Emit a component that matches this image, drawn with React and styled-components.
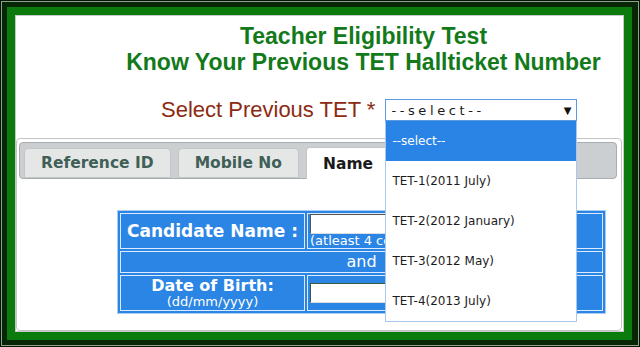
import styled, { createGlobalStyle } from "styled-components";

const GlobalStyle = createGlobalStyle`
  html, body {
    margin: 0;
    padding: 0;
    background: #ffffff;
  }
  * {
    box-sizing: border-box;
  }
`;

const options = [
  "--select--",
  "TET-1(2011 July)",
  "TET-2(2012 January)",
  "TET-3(2012 May)",
  "TET-4(2013 July)",
];

const App = () => {
  return (
    <>
      <GlobalStyle />
      <Frame>
        <GreenBand>
          <Panel>
            <Heading>
              <div>Teacher Eligibility Test</div>
              <div>Know Your Previous TET Hallticket Number</div>
            </Heading>

            <SelectRow>
              <Label>Select Previous TET *</Label>
              <SelectWrap>
                <SelectBox>
                  <span>--select--</span>
                  <Arrow>&#9660;</Arrow>
                </SelectBox>
                <OptionList>
                  {options.map((o, i) => (
                    <Option key={o} active={i === 0}>
                      {o}
                    </Option>
                  ))}
                </OptionList>
              </SelectWrap>
            </SelectRow>

            <Tabs>
              <TabBar>
                <Tab>Reference ID</Tab>
                <Tab>Mobile No</Tab>
                <Tab active>Name</Tab>
              </TabBar>

              <SearchTable>
                <tbody>
                  <tr>
                    <LabelCell size={17}>Candidate Name :</LabelCell>
                    <FieldCell>
                      <Input />
                      <Hint>(atleast 4 consecutive characters)</Hint>
                    </FieldCell>
                  </tr>
                  <tr>
                    <AndCell colSpan={2}>and</AndCell>
                  </tr>
                  <tr>
                    <LabelCell size={16}>
                      Date of Birth:
                      <Small>(dd/mm/yyyy)</Small>
                    </LabelCell>
                    <FieldCell>
                      <Input dark />
                    </FieldCell>
                  </tr>
                </tbody>
              </SearchTable>
            </Tabs>
          </Panel>
        </GreenBand>
      </Frame>
    </>
  );
};

export default App;

const Frame = styled.div`
  width: 640px;
  height: 347px;
  background: #062606;
  border: 1px solid #021402;
  box-shadow: inset 0 0 0 1px #8fa08f;
  padding: 6px 7px 6px 6px;
  display: flex;
`;

const GreenBand = styled.div`
  flex: 1;
  display: flex;
  background: #0a7b0c;
  padding: 8px;
`;

const Panel = styled.div`
  flex: 1;
  background: #ffffff;
  border: 1px solid #c9c9c9;
  display: flex;
  flex-direction: column;
  padding-top: 7px;
`;

const Heading = styled.div`
  padding-left: 88px;
  text-align: center;
  font-family: "Liberation Sans", Arial, sans-serif;
  font-weight: bold;
  font-size: 23px;
  line-height: 26px;
  color: #137a1b;
`;

const SelectRow = styled.div`
  display: flex;
  align-items: center;
  gap: 10px;
  padding-left: 145px;
  margin-top: 24px;
  height: 22px;
`;

const Label = styled.div`
  font-family: "Liberation Sans", Arial, sans-serif;
  font-size: 22px;
  color: #8c2a12;
  white-space: nowrap;
`;

const SelectWrap = styled.div`
  position: relative;
  width: 192px;
`;

const SelectBox = styled.div`
  height: 22px;
  border: 1px solid #5b9ae2;
  background: #ffffff;
  display: flex;
  align-items: center;
  justify-content: space-between;
  padding: 0 5px 0 5px;
  font-family: "DejaVu Sans", Verdana, sans-serif;
  font-size: 13px;
  letter-spacing: 3.6px;
  color: #1a1a1a;
`;

const Arrow = styled.span`
  font-size: 10px;
  letter-spacing: 0;
  color: #111;
`;

const OptionList = styled.div`
  position: absolute;
  top: 100%;
  left: 0;
  width: 192px;
  z-index: 10;
  background: #ffffff;
  border: 1px solid #a8c8ee;
  border-top: none;
`;

const Option = styled.div`
  height: 40px;
  display: flex;
  align-items: center;
  padding-left: 6px;
  font-family: "DejaVu Sans", Verdana, sans-serif;
  font-size: 12px;
  color: ${(p) => (p.active ? "#ffffff" : "#1c1c1c")};
  background: ${(p) => (p.active ? "#2a84e6" : "#ffffff")};
`;

const Tabs = styled.div`
  flex: 1;
  margin: 17px 1px 0 0;
  border: 1px solid #c4c4c4;
  border-radius: 4px;
  padding: 3px 3px 0 2px;
`;

const TabBar = styled.div`
  height: 37px;
  display: flex;
  align-items: flex-end;
  gap: 7px;
  padding-left: 4px;
  background: #cbcfd1;
  border: 1px solid #a9adaf;
  border-radius: 4px;
  margin-right: 1px;
`;

const Tab = styled.div`
  height: ${(p) => (p.active ? "32px" : "30px")};
  margin-bottom: ${(p) => (p.active ? "-1px" : "0")};
  padding: 0 16px;
  display: flex;
  align-items: center;
  font-family: "DejaVu Sans", Verdana, sans-serif;
  font-weight: bold;
  font-size: 15.5px;
  color: ${(p) => (p.active ? "#1a1a1a" : "#3f5f57")};
  background: ${(p) => (p.active ? "#ffffff" : "#e5e7e7")};
  border: 1px solid #c3c6c6;
  border-bottom: ${(p) => (p.active ? "none" : "1px solid #c3c6c6")};
  border-radius: 4px 4px 0 0;
`;

const SearchTable = styled.table`
  margin: 31px 0 0 98px;
  width: 489px;
  border-collapse: separate;
  border-spacing: 2px;
  background: #2b85e4;
  border: 1px solid #a9cdf4;
  font-family: "DejaVu Sans", Verdana, sans-serif;
  color: #ffffff;
`;

const LabelCell = styled.td`
  width: 185px;
  height: 36px;
  border: 1px solid #dbeafd;
  text-align: center;
  vertical-align: middle;
  font-weight: bold;
  font-size: ${(p) => p.size}px;
  line-height: ${(p) => p.size + 1}px;
  padding: 0;
`;

const Small = styled.div`
  font-weight: normal;
  font-size: 13px;
  line-height: 14px;
  margin-top: 1px;
`;

const FieldCell = styled.td`
  border: 1px solid #dbeafd;
  padding: 0 0 0 2px;
  vertical-align: middle;
`;

const Input = styled.div`
  width: 180px;
  height: 20px;
  background: #ffffff;
  border: 1px solid ${(p) => (p.dark ? "#3d5a45" : "#555")};
  border-right-color: #ddd;
  border-bottom-color: #ddd;
`;

const Hint = styled.div`
  font-size: 13px;
  line-height: 14px;
  white-space: nowrap;
  overflow: hidden;
`;

const AndCell = styled.td`
  height: 22px;
  border: 1px solid #dbeafd;
  text-align: center;
  font-size: 16px;
  line-height: 18px;
  padding: 0;
`;
